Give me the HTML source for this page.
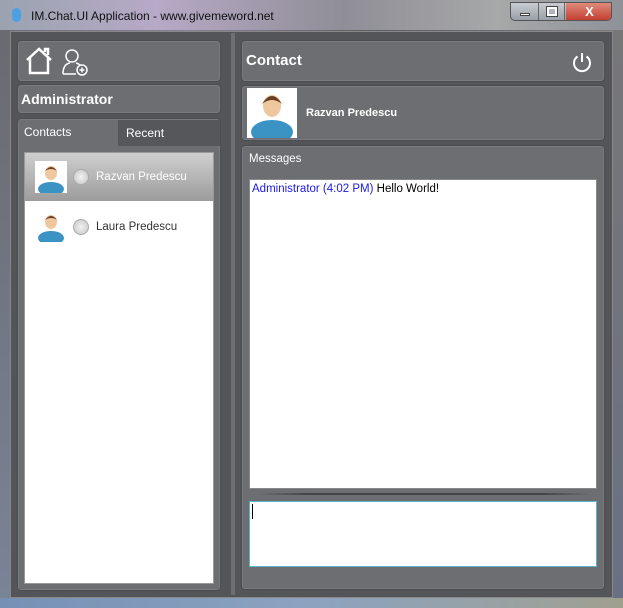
<!DOCTYPE html>
<html><head><style>
*{margin:0;padding:0;box-sizing:border-box}
body{width:623px;height:608px;overflow:hidden;font-family:"Liberation Sans","DejaVu Sans",sans-serif;background:linear-gradient(90deg,#6d6a7a,#8a7f95 30%,#5a5c66 60%,#7d7a80);position:relative}
.a{position:absolute}
.p{position:absolute;background:#6d6e72;border:1px solid #7a7b80;border-radius:3px;box-shadow:0 0 0 1px #4c4d51}
.t{color:#fff;font-weight:bold}
</style></head><body>
<div class="a" style="left:0;top:0;width:623px;height:30px;background:linear-gradient(90deg,#9aa3b0,#b7a9c7 25%,#8f8e97 55%,#a7a8a8 80%,#8e9298)"></div>
<div class="a" style="left:0;top:30px;width:10px;height:578px;background:linear-gradient(#6a6a70,#7a8498)"></div>
<div class="a" style="right:0;top:30px;width:10px;height:578px;background:linear-gradient(#777,#6a7084)"></div>
<div class="a" style="left:0;top:598px;width:623px;height:10px;background:linear-gradient(90deg,#7690b5,#8ca3c0 50%,#a0a090)"></div>
<div class="a" style="left:12px;top:8px;width:9px;height:14px;border-radius:5px;background:#4aa0e0"></div>
<div class="a" style="left:31px;top:9px;font-size:12px;color:#111">IM.Chat.UI Application - www.givemeword.net</div>
<div class="a" style="left:510px;top:2px;width:102px;height:19px;border:1px solid #555;border-radius:0 0 5px 5px;background:linear-gradient(#c8ccd2,#9aa0a8);overflow:hidden">
<div class="a" style="left:0;top:0;width:28px;height:19px;border-right:1px solid #666"><div class="a" style="left:9px;top:10px;width:10px;height:3px;background:#fff;border:1px solid #444"></div></div>
<div class="a" style="left:28px;top:0;width:26px;height:19px;border-right:1px solid #666"><div class="a" style="left:8px;top:4px;width:10px;height:9px;border:2px solid #fff;outline:1px solid #444"></div></div>
<div class="a" style="left:55px;top:0;width:47px;height:19px;background:linear-gradient(#e08a7a,#c0372a);color:#fff;font-weight:bold;font-size:13px;text-align:center;line-height:18px">X</div></div>
<div class="a" style="left:10px;top:31px;width:603px;height:567px;background:#545559;border:1px solid #888"></div>
<div class="a" style="left:231px;top:33px;width:4px;height:562px;background:#6e6f73"></div>
<div class="p" style="left:18px;top:41px;width:202px;height:40px"></div>
<svg class="a" style="left:24px;top:46px" width="66" height="30" viewBox="0 0 66 30"><path d="M3 14 L15 3 L27 14 M6 12 V27 H24 V12 M21 6 V3 H24 V9" fill="none" stroke="#fff" stroke-width="2.5"/><circle cx="48" cy="10" r="6" fill="none" stroke="#fff" stroke-width="1.5"/><path d="M39 28 Q39 18 46 17 M52 17 Q55 18 56 19 M39 28 H52" fill="none" stroke="#fff" stroke-width="1.5"/><circle cx="58" cy="24" r="5" fill="#6b6c71" stroke="#fff" stroke-width="1.5"/><path d="M55.5 24h5M58 21.5v5" stroke="#fff" stroke-width="1.5"/></svg>
<div class="p" style="left:18px;top:85px;width:202px;height:28px"></div>
<div class="a t" style="left:21px;top:91px;font-size:14px">Administrator</div>
<div class="p" style="left:18px;top:119px;width:202px;height:471px"></div>
<div class="a" style="left:118px;top:120px;width:102px;height:26px;background:#56575b"></div>
<div class="a" style="left:24px;top:125px;font-size:12px;color:#fff">Contacts</div>
<div class="a" style="left:126px;top:126px;font-size:12px;color:#fff">Recent</div>
<div class="a" style="left:24px;top:152px;width:190px;height:432px;background:#fff;border:1px solid #999"></div>
<div class="a" style="left:25px;top:153px;width:188px;height:48px;background:linear-gradient(#cfcfcf,#9c9c9c)"></div>
<div class="a" style="left:35px;top:161px;width:32px;height:32px;background:#fff"></div>
<svg class="a" style="left:35px;top:161px" width="32" height="32"><ellipse cx="16" cy="28" rx="13" ry="7" fill="#3b93c4"/><ellipse cx="16" cy="12" rx="6" ry="7" fill="#f0c8a0"/><path d="M10 10 Q16 2 22 10 Q16 6 10 10" fill="#6a3e20"/></svg>
<svg class="a" style="left:35px;top:210px" width="32" height="32"><ellipse cx="16" cy="28" rx="13" ry="7" fill="#3b93c4"/><ellipse cx="16" cy="12" rx="6" ry="7" fill="#f0c8a0"/><path d="M10 10 Q16 2 22 10 Q16 6 10 10" fill="#6a3e20"/></svg>
<div class="a" style="left:73px;top:169px;width:16px;height:16px;border-radius:50%;background:radial-gradient(#f2f2f2,#c4c4c4);border:1px solid #aaa"></div>
<div class="a" style="left:73px;top:219px;width:16px;height:16px;border-radius:50%;background:radial-gradient(#f2f2f2,#c4c4c4);border:1px solid #aaa"></div>
<div class="a" style="left:96px;top:171px;font-size:11.5px;color:#fff">Razvan Predescu</div>
<div class="a" style="left:96px;top:221px;font-size:11.5px;color:#333">Laura Predescu</div>
<div class="p" style="left:242px;top:41px;width:362px;height:40px"></div>
<div class="a t" style="left:246px;top:52px;font-size:15px">Contact</div>
<svg class="a" style="left:571px;top:51px" width="22" height="22"><path d="M6.5 5.5 A8 8 0 1 0 15.5 5.5" fill="none" stroke="#fff" stroke-width="2"/><path d="M11 2 V11" stroke="#fff" stroke-width="2"/></svg>
<div class="p" style="left:242px;top:86px;width:362px;height:54px"></div>
<div class="a" style="left:247px;top:88px;width:50px;height:50px;background:#fff"></div>
<svg class="a" style="left:247px;top:88px" width="50" height="50"><ellipse cx="25" cy="44" rx="21" ry="12" fill="#3b93c4"/><ellipse cx="25" cy="18" rx="9" ry="11" fill="#f0c8a0"/><path d="M15 16 Q25 0 35 16 Q25 8 15 16" fill="#6a3e20"/></svg>
<div class="a t" style="left:306px;top:107px;font-size:11px">Razvan Predescu</div>
<div class="p" style="left:242px;top:146px;width:362px;height:443px"></div>
<div class="a" style="left:249px;top:153px;font-size:11.5px;color:#fff">Messages</div>
<div class="a" style="left:249px;top:179px;width:348px;height:310px;background:#fff;border:1px solid #888"></div>
<div class="a" style="left:252px;top:183px;font-size:11.5px;color:#000"><span style="color:#1a1aee">Administrator (4:02 PM)</span> Hello World!</div>
<div class="a" style="left:258px;top:493px;width:334px;height:2px;background:linear-gradient(90deg,transparent,#444 15%,#444 85%,transparent)"></div>
<div class="a" style="left:249px;top:501px;width:348px;height:66px;background:#fff;border:1px solid #5bb5c8"></div>
<div class="a" style="left:252px;top:504px;width:1px;height:15px;background:#000"></div>
</body></html>
